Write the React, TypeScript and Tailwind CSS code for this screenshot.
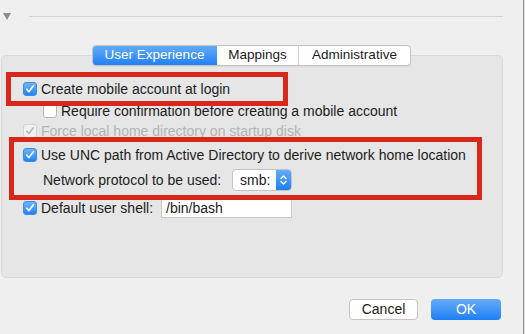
import React from "react";

const font = { fontFamily: '"Liberation Sans", Arial, sans-serif' };

function Check({ checked, disabled }: { checked?: boolean; disabled?: boolean }) {
  if (disabled) {
    return (
      <div className="w-[14px] h-[14px] rounded-[3px] border border-[#d2d2d2] bg-[#f2f2f2] flex items-center justify-center shrink-0">
        <svg width="10" height="10" viewBox="0 0 10 10">
          <path d="M1.8 5.2 L4 7.6 L8.4 1.8" fill="none" stroke="#b8b8b8" strokeWidth="1.6" strokeLinecap="round" strokeLinejoin="round" />
        </svg>
      </div>
    );
  }
  if (!checked) {
    return <div className="w-[14px] h-[14px] rounded-[3px] border border-[#b5b5b5] bg-white shrink-0" />;
  }
  return (
    <div className="w-[14px] h-[14px] rounded-[3px] bg-gradient-to-b from-[#6cb3fa] to-[#1f83f6] border border-[#3b8ce8] flex items-center justify-center shrink-0">
      <svg width="10" height="10" viewBox="0 0 10 10">
        <path d="M1.8 5.2 L4 7.6 L8.4 1.8" fill="none" stroke="#ffffff" strokeWidth="1.6" strokeLinecap="round" strokeLinejoin="round" />
      </svg>
    </div>
  );
}

export default function App() {
  return (
    <div className="w-[525px] h-[334px] bg-[#efefef] flex overflow-hidden text-[14px] text-[#1c1c1c]" style={font}>
      <div className="w-[523px] flex flex-col">
        {/* disclosure row */}
        <div className="flex items-center h-[8px] mt-[12px]">
          <svg width="8" height="7" viewBox="0 0 8 7" className="ml-[3px]">
            <path d="M0 0 H8 L4 7 Z" fill="#8c8c8c" />
          </svg>
          <div className="ml-[18px] w-[474px] h-[1px] bg-[#d4d4d4]" />
        </div>

        {/* tabs */}
        <div className="relative z-10 mt-[25px] -mb-[11px] self-start ml-[92px] flex h-[21px] rounded-[4px] border border-[#c3c3c3] bg-white overflow-hidden text-[13.5px] shadow-[0_1px_0_rgba(0,0,0,0.05)]">
          <div className="w-[125px] flex items-center justify-center text-white bg-gradient-to-b from-[#63acf9] to-[#1a7ef5] -my-[1px] -ml-[1px] rounded-l-[4px]">
            User Experience
          </div>
          <div className="w-[82px] flex items-center justify-center border-r border-[#d0d0d0]">Mappings</div>
          <div className="w-[111px] flex items-center justify-center">Administrative</div>
        </div>

        {/* panel */}
        <div className="relative ml-[1px] w-[502px] h-[223px] rounded-[5px] border border-[#d9d9d9] bg-[#e6e6e6] pt-[23px] pl-[21px] flex flex-col">
          <div className="flex items-center h-[20px] gap-[4px]">
            <Check checked />
            <span>Create mobile account at login</span>
          </div>
          <div className="flex items-center h-[20px] gap-[4px] mt-[2px] ml-[20px]">
            <Check />
            <span>Require confirmation before creating a mobile account</span>
          </div>
          <div className="flex items-center h-[20px] gap-[4px]">
            <Check disabled />
            <span className="text-[#b3b3b3]">Force local home directory on startup disk</span>
          </div>
          <div className="flex items-center h-[20px] gap-[4px] mt-[4px]">
            <Check checked />
            <span>Use UNC path from Active Directory to derive network home location</span>
          </div>
          <div className="flex items-center h-[22px] mt-[4px] ml-[20px]">
            <span className="w-[189px]">Network protocol to be used:</span>
            <div className="w-[60px] h-[22px] rounded-[4px] border border-[#c4c4c4] bg-white flex items-stretch overflow-hidden">
              <div className="flex-1 flex items-center pl-[7px]">smb:</div>
              <div className="w-[15px] bg-gradient-to-b from-[#63acf9] to-[#1a7ef5] flex items-center justify-center">
                <svg width="7" height="12" viewBox="0 0 7 12">
                  <path d="M1 4.5 L3.5 2 L6 4.5 M1 7.5 L3.5 10 L6 7.5" fill="none" stroke="#fff" strokeWidth="1.3" strokeLinecap="round" strokeLinejoin="round" />
                </svg>
              </div>
            </div>
          </div>
          <div className="flex items-center h-[20px] mt-[7px]">
            <div className="flex items-center gap-[4px] w-[138px]">
              <Check checked />
              <span>Default user shell:</span>
            </div>
            <div className="w-[131px] h-[20px] bg-white border border-[#c8c8c8] flex items-center pl-[4px]">/bin/bash</div>
          </div>

          {/* annotation boxes */}
          <div className="absolute left-[4px] top-[16px] w-[282px] h-[34px] border-[5px] border-[#d9281b]" />
          <div className="absolute left-[7px] top-[81px] w-[473px] h-[63px] border-[5px] border-[#d9281b]" />
        </div>

        {/* buttons */}
        <div className="flex justify-end gap-[13px] mt-[21px] pr-[22px]">
          <div className="w-[69px] h-[21px] rounded-[4px] border border-[#c4c4c4] bg-white flex items-center justify-center">Cancel</div>
          <div className="w-[70px] h-[21px] rounded-[4px] bg-gradient-to-b from-[#63acf9] to-[#1a7ef5] text-white flex items-center justify-center">OK</div>
        </div>
      </div>
      <div className="w-[1px] bg-[#8e8e8e]" />
      <div className="w-[1px] bg-[#e4e4e4]" />
    </div>
  );
}
